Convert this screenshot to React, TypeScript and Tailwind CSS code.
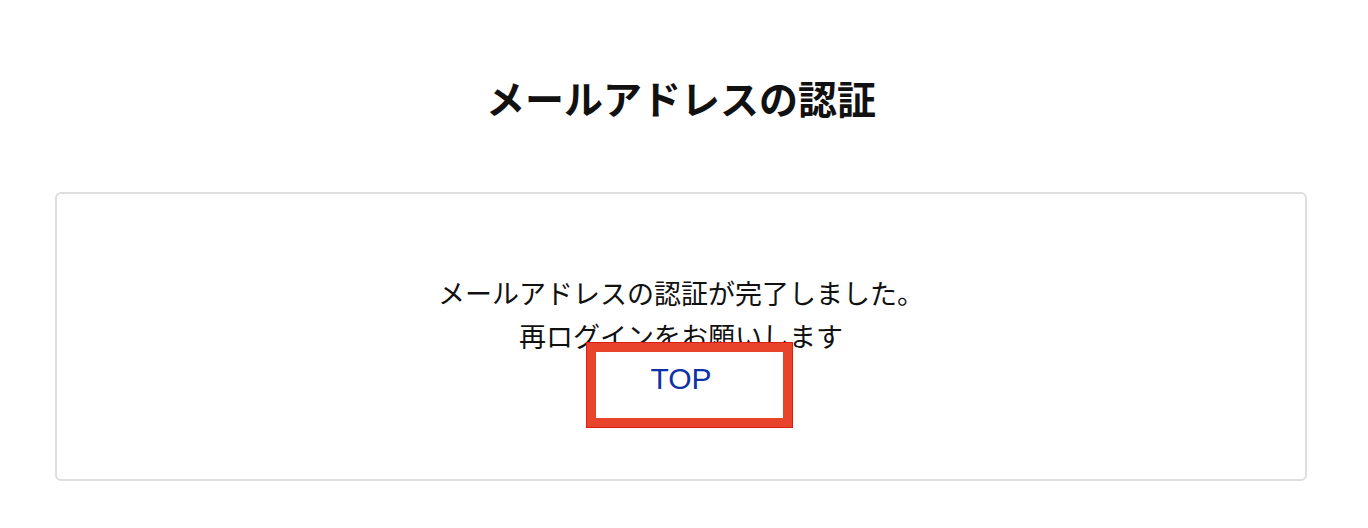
export default function App() {
  return (
    <div
      className="min-h-screen bg-white pl-[55px] pr-[61px] pt-[69px] text-[#111]"
      style={{ fontFamily: '"Liberation Sans", "Noto Sans CJK JP", sans-serif' }}
    >
      <h1 className="text-center text-[39px] font-bold leading-[57px] [font-family:'Noto_Sans_CJK_JP',sans-serif]">
        メールアドレスの認証
      </h1>

      <div className="relative mt-[66px] h-[289px] rounded-md border-2 border-[#dedede] pt-[77px]">
        <p className="text-center text-[27px] leading-[43px] [font-family:'Noto_Sans_CJK_JP',sans-serif]">
          メールアドレスの認証が完了しました。
          <br />
          再ログインをお願いします
        </p>
        <div className="text-center leading-[43px]">
          <a
            href="#"
            className="text-[30px] text-[#0c32a8] [font-family:'Liberation_Sans',sans-serif]"
          >
            TOP
          </a>
        </div>

        {/* highlight box drawn over the link */}
        <div className="pointer-events-none absolute left-[530px] top-[149px] h-[84px] w-[205px] border-[9px] border-[#e8432b] outline outline-1 outline-[#e01b12]" />
      </div>
    </div>
  );
}
